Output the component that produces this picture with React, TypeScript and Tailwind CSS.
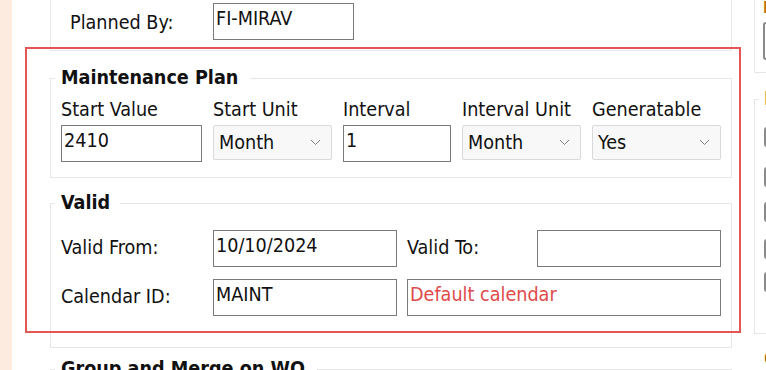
import React from "react";

const Chevron = () => (
  <svg width="11" height="7" viewBox="0 0 11 7" className="shrink-0">
    <polyline points="1,1 5.5,5.5 10,1" fill="none" stroke="#808080" strokeWidth="1" />
  </svg>
);

function TextBox({ value, className = "", red = false }: { value?: string; className?: string; red?: boolean }) {
  return (
    <div
      className={`h-[37px] border border-[#7a7a7a] bg-white pl-[2px] pt-[4px] leading-[22px] whitespace-nowrap overflow-hidden ${
        red ? "text-[#e04a4a]" : ""
      } ${className}`}
    >
      {value}
    </div>
  );
}

function Select({ value }: { value: string }) {
  return (
    <div className="h-[35px] border border-[#d9d9d9] rounded-[2px] bg-[#f8f8f8] flex items-center justify-between pl-[5px] pr-[10px]">
      <span className="mt-[1px]">{value}</span>
      <Chevron />
    </div>
  );
}

export default function App() {
  return (
    <div className="w-[766px] h-[370px] overflow-hidden relative bg-white flex text-[#111111] font-['DejaVu_Sans_Condensed','DejaVu_Sans',sans-serif] text-[19.6px] leading-[22px]">
      <div className="w-[12px] shrink-0 bg-[#fdebe0]" />

      {/* Main column */}
      <div className="ml-[38px] w-[682px] shrink-0 flex flex-col">
        <div className="h-[51px] shrink-0 border-x border-b border-[#e8e8e8] flex items-start pl-[19px]">
          <div className="w-[143px] mt-[12px]">Planned By:</div>
          <TextBox value="FI-MIRAV" className="w-[141px] mt-[3px]" />
        </div>

        <fieldset className="mt-[16px] border border-[#e6e6e6] pl-[4px] pr-[10px] pb-[15px] min-w-0">
          <legend className="pl-[6px] pr-[12px] font-bold leading-[22px]">Maintenance Plan</legend>
          <div className="pl-[6px] mt-[10px] grid grid-cols-[141px_119px_108px_119px_129px] gap-x-[11px] gap-y-[4px] items-start">
            <div>Start Value</div>
            <div>Start Unit</div>
            <div>Interval</div>
            <div>Interval Unit</div>
            <div>Generatable</div>
            <TextBox value="2410" />
            <Select value="Month" />
            <TextBox value="1" />
            <Select value="Month" />
            <Select value="Yes" />
          </div>
        </fieldset>

        <fieldset className="mt-[14px] border border-[#e6e6e6] pl-[4px] pr-[10px] pb-[31px] min-w-0">
          <legend className="pl-[6px] pr-[10px] font-bold leading-[22px]">Valid</legend>
          <div className="pl-[6px] mt-[16px] grid grid-cols-[152px_184px_10px_130px_184px] gap-y-[12px] items-center">
            <div className="-mt-[2px]">Valid From:</div>
            <TextBox value="10/10/2024" />
            <div />
            <div className="-mt-[2px]">Valid To:</div>
            <TextBox value="" />
            <div className="-mt-[2px]">Calendar ID:</div>
            <TextBox value="MAINT" />
            <div />
            <TextBox value="Default calendar" red className="col-span-2" />
          </div>
        </fieldset>

        <fieldset className="mt-[10px] border border-[#e6e6e6] pl-[4px] pr-[10px] pb-[20px] min-w-0">
          <legend className="pl-[6px] pr-[12px] font-bold leading-[22px]">Group and Merge on WO</legend>
          <div className="h-[40px]" />
        </fieldset>
      </div>

      {/* Right column (cut off) */}
      <div className="ml-[22px] w-[200px] shrink-0 flex flex-col">
        <div className="h-[73px] shrink-0 border-l border-b border-[#e6e6e6] pl-[8px]">
          <div className="text-[#b8730f] font-bold leading-[15px] text-[15px] mt-[1px]">Plan</div>
          <div className="mt-[6px] h-[38px] w-[150px] border-2 border-[#8a8a8a] rounded-[3px]" />
        </div>
        <fieldset className="mt-[15px] border border-[#e6e6e6] pl-[4px] pb-[10px] min-w-0 h-[258px]">
          <legend className="px-[5px] font-bold leading-[22px] text-[#a8650c]">Info</legend>
          <div className="pl-[5px] flex flex-col">
            <div className="mt-[17px] h-[20px] w-[150px] border-2 border-[#8a8a8a] rounded-[3px]" />
            <div className="mt-[20px] h-[20px] w-[150px] border-2 border-[#8a8a8a] rounded-[3px]" />
            <div className="mt-[15px] h-[20px] w-[150px] border-2 border-[#8a8a8a] rounded-[3px]" />
            <div className="mt-[17px] h-[20px] w-[150px] border-2 border-[#8a8a8a] rounded-[3px]" />
            <div className="mt-[13px] h-[20px] w-[150px] border-2 border-[#8a8a8a] rounded-[3px]" />
          </div>
        </fieldset>
        <div className="mt-[14px] pl-[10px] font-bold text-[#a8650c]">Other</div>
      </div>

      {/* Red highlight annotation */}
      <div className="absolute left-[25px] top-[47px] w-[716px] h-[286px] border-2 border-[#e25656] pointer-events-none" />
    </div>
  );
}
